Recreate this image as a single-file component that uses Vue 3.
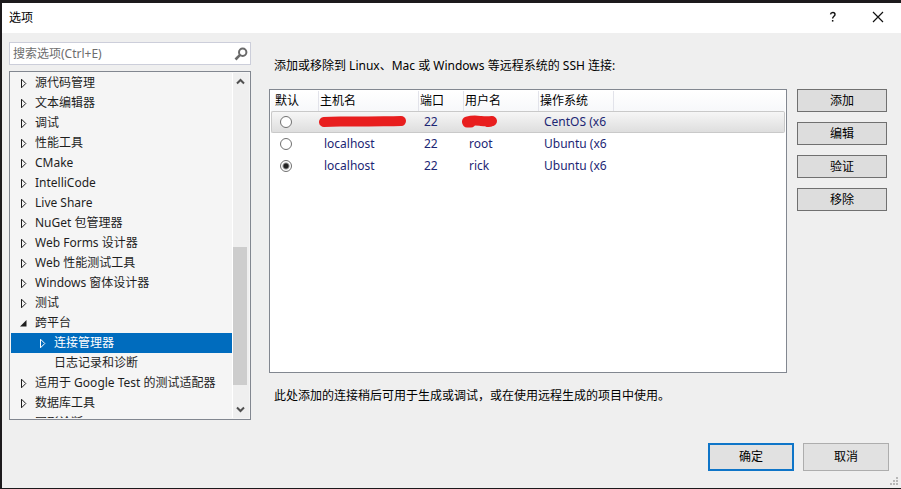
<script setup>
import { ref } from 'vue'

const nodes = [
  { label: '源代码管理', state: 'closed' },
  { label: '文本编辑器', state: 'closed' },
  { label: '调试', state: 'closed' },
  { label: '性能工具', state: 'closed' },
  { label: 'CMake', state: 'closed' },
  { label: 'IntelliCode', state: 'closed' },
  { label: 'Live Share', state: 'closed' },
  { label: 'NuGet 包管理器', state: 'closed' },
  { label: 'Web Forms 设计器', state: 'closed' },
  { label: 'Web 性能测试工具', state: 'closed' },
  { label: 'Windows 窗体设计器', state: 'closed' },
  { label: '测试', state: 'closed' },
  { label: '跨平台', state: 'open' },
  { label: '连接管理器', state: 'closed', child: true },
  { label: '日志记录和诊断', state: 'leaf', child: true },
  { label: '适用于 Google Test 的测试适配器', state: 'closed' },
  { label: '数据库工具', state: 'closed' },
  { label: '图形诊断', state: 'closed' },
]
const selected = ref('连接管理器')

const connections = [
  { id: 0, host: '', port: 22, user: '', os: 'CentOS (x6' },
  { id: 1, host: 'localhost', port: 22, user: 'root', os: 'Ubuntu (x6' },
  { id: 2, host: 'localhost', port: 22, user: 'rick', os: 'Ubuntu (x6' },
]
const current = ref(0)
const fallback = ref(2)
const query = ref('')
const actions = ['添加', '编辑', '验证', '移除']
</script>

<template>
  <div class="window">
    <header class="titlebar">
      <h1>选项</h1>
      <button class="caption" aria-label="帮助">
        <svg width="12" height="12" viewBox="0 0 12 12"><path d="M3.500 3.400C3.700 2 4.500 1.500 5.800 1.500S8 2.100 8 3.400C8 5.200 5.600 5.200 5.600 7.600" fill="none" stroke="#111" stroke-width="1.400" /><rect x="4.900" y="9" width="1.500" height="1.600" fill="#111" /></svg>
      </button>
      <button class="caption" aria-label="关闭">
        <svg width="12" height="12" viewBox="0 0 12 12"><path d="M1 1L11 11M11 1L1 11" stroke="#111" stroke-width="1.200" /></svg>
      </button>
    </header>

    <main class="body">
      <aside class="side">
        <div class="search">
          <input v-model="query" type="text" placeholder="搜索选项(Ctrl+E)" aria-label="搜索选项" />
          <svg width="14" height="14" viewBox="0 0 14 14"><circle cx="8.700" cy="5.200" r="3.700" fill="none" stroke="#6a6a6a" stroke-width="2" /><path d="M6.300 7.700L1.500 12.500" stroke="#6a6a6a" stroke-width="2.600" /></svg>
        </div>
        <div class="tree">
          <ul role="tree">
            <li
              v-for="n in nodes"
              :key="n.label"
              role="treeitem"
              :aria-selected="n.label === selected"
              :class="{ child: n.child, selected: n.label === selected }"
              @click="selected = n.label"
            >
              <svg width="8" height="10" viewBox="0 0 8 10">
                <path v-if="n.state === 'closed'" d="M1.500 1.200V9.800L5.800 5.500Z" fill="none" stroke="currentColor" />
                <path v-if="n.state === 'open'" d="M6.500 2V8.500H0Z" fill="currentColor" />
              </svg>
              <span>{{ n.label }}</span>
            </li>
          </ul>
          <div class="scrollbar">
            <svg width="9" height="7" viewBox="0 0 9 7"><path d="M1 5.500L4.500 2L8 5.500" fill="none" stroke="#505050" stroke-width="2" /></svg>
            <div class="track"><div class="thumb"></div></div>
            <svg width="9" height="7" viewBox="0 0 9 7"><path d="M1 1.500L4.500 5L8 1.500" fill="none" stroke="#505050" stroke-width="2" /></svg>
          </div>
        </div>
      </aside>

      <section class="panel">
        <p class="intro">添加或移除到 Linux、Mac 或 Windows 等远程系统的 SSH 连接:</p>
        <div class="list">
          <table>
            <colgroup>
              <col class="c-default" /><col class="c-host" /><col class="c-port" /><col class="c-user" /><col class="c-os" /><col />
            </colgroup>
            <thead>
              <tr><th>默认</th><th>主机名</th><th>端口</th><th>用户名</th><th>操作系统</th><th></th></tr>
            </thead>
            <tbody>
              <tr v-for="c in connections" :key="c.id" :class="{ current: c.id === current }" @click="current = c.id">
                <td class="pick"><input v-model="fallback" type="radio" name="default" :value="c.id" :aria-label="'默认 ' + c.os" /></td>
                <td :class="{ masked: !c.host }">
                  <template v-if="c.host">{{ c.host }}</template>
                  <svg v-else width="88" height="14" viewBox="0 0 88 14"><path d="M5 7C20 5.800 30 7 45 6.500S70 6.500 82 6" fill="none" stroke="#e81e1e" stroke-width="10" stroke-linecap="round" /></svg>
                </td>
                <td>{{ c.port }}</td>
                <td :class="{ masked: !c.user }">
                  <template v-if="c.user">{{ c.user }}</template>
                  <svg v-else class="wide" width="38" height="14" viewBox="0 0 38 14"><path d="M6 6.500C12 5 15 5.500 20 6S26 6.500 31 6" fill="none" stroke="#e81e1e" stroke-width="10" stroke-linecap="round" /><path d="M6 8H10M27 7.500L30 7" stroke="#e81e1e" stroke-width="9" stroke-linecap="round" /></svg>
                </td>
                <td class="os">{{ c.os }}</td>
                <td></td>
              </tr>
            </tbody>
          </table>
        </div>
        <p class="note">此处添加的连接稍后可用于生成或调试，或在使用远程生成的项目中使用。</p>
      </section>

      <nav class="actions">
        <button v-for="a in actions" :key="a">{{ a }}</button>
      </nav>
    </main>

    <footer class="footer">
      <button class="primary">确定</button>
      <button>取消</button>
      <svg class="grip" width="9" height="9" viewBox="0 0 9 9" fill="#b8b8b8"><path d="M6 0h2v2h-2zM3 3h2v2h-2zM6 3h2v2h-2zM0 6h2v2h-2zM3 6h2v2h-2zM6 6h2v2h-2z" /></svg>
    </footer>
  </div>
</template>

<style>
body {
  margin: 0;
}
</style>

<style scoped>
* {
  box-sizing: border-box;
}
.window {
  display: flex;
  flex-direction: column;
  height: 100vh;
  position: relative;
  border: solid #1c1a1c;
  border-width: 3px 0 1px 2px;
  background: #efefef;
  color: #1e1e1e;
  font: 12px/20px "Noto Sans", "Noto Sans CJK SC", sans-serif;
}
button,
input {
  font: inherit;
  color: inherit;
}
.titlebar {
  display: flex;
  flex: none;
  height: 30px;
  padding-left: 7px;
  background: #fff;
}
h1 {
  flex: 1;
  margin: 0;
  font-size: 12px;
  line-height: 30px;
  font-weight: 400;
  color: #000;
}
.caption {
  display: flex;
  align-items: center;
  justify-content: center;
  width: 45px;
  padding: 0 2px 2px 0;
  border: 0;
  background: none;
}
.body {
  flex: 1;
  min-height: 0;
  display: grid;
  grid-template-columns: 242px minmax(0, 1fr) 90px;
  padding: 9px 14px 0 7px;
}
.side {
  display: flex;
  flex-direction: column;
  gap: 6px;
  min-height: 0;
}
.search {
  display: flex;
  align-items: center;
  height: 23px;
  padding-right: 2px;
  border: 1px solid #ccceda;
  background: #fff;
}
.search input {
  flex: 1;
  min-width: 0;
  height: 20px;
  padding: 0 3px;
  border: 0;
  outline: 0;
  background: none;
}
.search input::placeholder {
  color: #6d6d6d;
  opacity: 1;
}
.tree {
  flex: 1;
  min-height: 0;
  display: flex;
  padding: 1px;
  border: 1px solid #828790;
  background: #f5f5f5;
}
.tree ul {
  flex: 1;
  margin: 0;
  padding: 0;
  overflow: hidden;
  list-style: none;
}
.tree li {
  display: flex;
  align-items: center;
  gap: 7px;
  height: 20px;
  padding-left: 9px;
  white-space: nowrap;
}
.tree li.child {
  padding-left: 28px;
}
.tree li.selected {
  background: #006cbe;
  color: #fff;
}
.scrollbar {
  display: flex;
  flex-direction: column;
  align-items: center;
  width: 17px;
  padding: 5px 2px 5px 0;
  border-left: 1px solid #fff;
  background: #efefef;
}
.track {
  flex: 1;
  align-self: stretch;
  display: flex;
  flex-direction: column;
  justify-content: flex-end;
  padding-bottom: 21px;
}
.thumb {
  height: 46%;
  background: #cdcdcd;
}
.panel {
  display: flex;
  flex-direction: column;
  min-height: 0;
  padding: 14px 10px 0 18px;
  color: #000;
}
.intro,
.note {
  margin: 0;
  padding-left: 5px;
}
.list {
  flex: 1;
  min-height: 0;
  margin: 13px 0;
  padding: 1px;
  overflow: hidden;
  border: 1px solid #828790;
  background: #fff;
}
table {
  width: 100%;
  table-layout: fixed;
  border-collapse: separate;
  border-spacing: 0;
}
.c-default {
  width: 48px;
}
.c-host {
  width: 100px;
}
.c-port {
  width: 45px;
}
.c-user,
.c-os {
  width: 75px;
}
th {
  height: 20px;
  padding: 0 0 0 1px;
  border-right: 1px solid #e2e3ea;
  background: linear-gradient(#fff, #f7f8fa);
  text-align: left;
  font-weight: 400;
  line-height: 18px;
}
th:first-child {
  padding-left: 4px;
}
th:last-child {
  border-right: 0;
}
td {
  height: 22px;
  padding: 0 0 0 5px;
  border: solid transparent;
  border-width: 1px 0;
  line-height: 20px;
  color: #1c2674;
}
td.os {
  white-space: nowrap;
}
td.masked {
  padding-left: 0;
}
td svg {
  display: block;
}
td .wide {
  margin-left: -3px;
}
.current td {
  border-color: #c9c9c9;
  background: linear-gradient(#f6f6f6, #dedede);
}
.current td:first-child {
  border-left: 1px solid #c9c9c9;
  border-radius: 2px 0 0 2px;
}
.current td:last-child {
  border-right: 1px solid #c9c9c9;
  border-radius: 0 2px 2px 0;
}
td.pick {
  padding-left: 9px;
}
.current td.pick {
  padding-left: 8px;
}
.pick input {
  appearance: none;
  display: block;
  width: 12px;
  height: 12px;
  margin: 0;
  border: 1px solid #707070;
  border-radius: 50%;
  background: #fff;
}
.pick input:checked {
  background: radial-gradient(circle, #212121 2px, #fff 4px);
}
.note {
  margin-bottom: 14px;
}
.actions {
  display: flex;
  flex-direction: column;
  gap: 10px;
  padding-top: 47px;
}
.actions button {
  height: 23px;
  padding: 0;
  border: 1px solid #707070;
  background: #ddd;
  line-height: 20px;
  color: #000;
}
.footer {
  display: flex;
  justify-content: flex-end;
  gap: 9px;
  padding: 23px 12px 17px;
}
.footer button {
  width: 86px;
  height: 28px;
  padding: 0;
  border: 1px solid #adadad;
  background: #e1e1e1;
  color: #000;
}
.footer .primary {
  border: 2px solid #0f75c8;
}
.grip {
  position: absolute;
  right: 2px;
  bottom: 2px;
}
</style>
